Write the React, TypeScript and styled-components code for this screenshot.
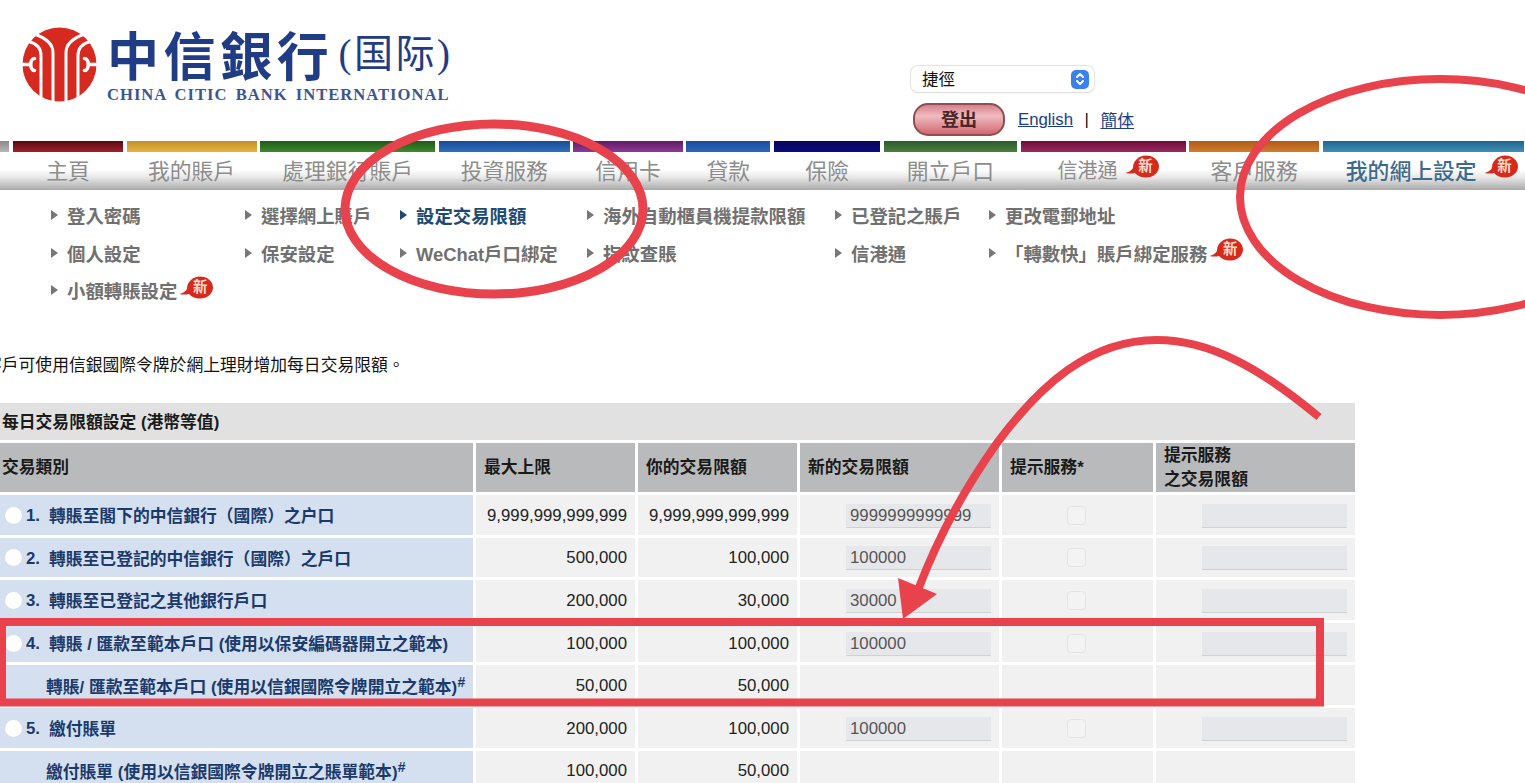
import React from "react";
import styled, { createGlobalStyle } from "styled-components";

const Global = createGlobalStyle`
  html, body { margin: 0; padding: 0; background: #fff; overflow: hidden; }
  body { font-family: "Liberation Sans", "Noto Sans CJK TC", sans-serif; font-size: 16.8px; color: #111; }
`;

const Page = styled.div`
  position: relative;
  width: 1525px;
  height: 783px;
  overflow: hidden;
`;

const Header = styled.header`
  display: flex;
  height: 141px;
`;

const LogoBlock = styled.div`
  flex: 0 0 911px;
  display: flex;
  padding: 27px 0 0 22px;
  box-sizing: border-box;
`;

const LogoMark = styled.svg`
  width: 75px;
  height: 75px;
  flex: none;
`;

const LogoText = styled.div`
  margin-left: 10px;
  display: flex;
  flex-direction: column;
  color: #1f3c84;
`;

const LogoCn = styled.div`
  display: flex;
  align-items: center;
  height: 54px;
  font-family: "Noto Sans CJK TC", sans-serif;
  font-size: 52px;
  font-weight: 700;
  letter-spacing: 4.6px;
  line-height: 54px;
  white-space: nowrap;
`;

const LogoSuffix = styled.span`
  font-family: "Liberation Serif", "Noto Sans CJK SC", serif;
  font-size: 39px;
  font-weight: 400;
  letter-spacing: 2.5px;
  margin-left: 5px;
`;

const LogoEn = styled.div`
  font-family: "Liberation Serif", serif;
  font-size: 16.6px;
  font-weight: 700;
  letter-spacing: 1px;
  word-spacing: 3px;
  line-height: 18px;
  margin-top: 5px;
  color: #3c5590;
  white-space: nowrap;
`;

const UserCol = styled.div`
  display: flex;
  flex-direction: column;
  padding-top: 66px;
  gap: 11px;
`;

const FakeSelect = styled.div`
  position: relative;
  width: 183px;
  height: 26px;
  box-sizing: border-box;
  display: flex;
  align-items: center;
  padding: 0 5px 2px 11px;
  justify-content: space-between;
  background: #fff;
  border-radius: 7px;
  box-shadow: 0 0 1px 1px #e2e2e2, 0 1px 1px #cfcfcf;
  font-size: 16.4px;
`;

const SelectArrows = styled.span`
  display: flex;
  width: 18px;
  height: 19px;
  margin-top: 2px;
  align-items: center;
  justify-content: center;
  background: #3a80ee;
  border-radius: 5px;
`;

const UserRow = styled.div`
  display: flex;
  align-items: center;
  height: 33px;
  padding-left: 2px;
`;

const LogoutButton = styled.button`
  width: 92px;
  height: 33px;
  padding: 0 0 3px;
  border: 2px solid #8d4f4f;
  border-radius: 15px;
  background: linear-gradient(#d6808a 0%, #efbcc0 38%, #e9a9ae 52%, #d2666f 100%);
  color: #4a2626;
  font-family: inherit;
  font-size: 18px;
  font-weight: 700;
`;

const LangLink = styled.a<{ $gap?: number }>`
  margin-left: ${(p) => p.$gap ?? 0}px;
  padding-top: 1px;
  color: #1d3e86;
  text-decoration: underline;
  font-size: 16.8px;
`;

const LangSep = styled.span`
  margin: 0 11.5px;
  font-size: 16.8px;
`;

const Nav = styled.nav`
  display: flex;
  gap: 3.6px;
  height: 49px;
  background: linear-gradient(#fff 0, #fff 58%, #e6e6e6 75%, #a9a9a9 100%);
`;

const NavItem = styled.div<{ $w: number; $from: string; $to: string }>`
  flex: 0 0 ${(p) => p.$w}px;
  display: flex;
  flex-direction: column;
  &::before {
    content: "";
    height: 11px;
    background: linear-gradient(${(p) => p.$from}, ${(p) => p.$to});
  }
`;

const NavLabel = styled.div<{ $active?: boolean; $pad?: number; $size?: number }>`
  flex: 1;
  display: flex;
  align-items: center;
  justify-content: center;
  gap: 7px;
  padding-left: ${(p) => p.$pad ?? 0}px;
  padding-bottom: 3px;
  font-size: ${(p) => p.$size ?? 21.8}px;
  font-weight: ${(p) => (p.$active ? 500 : 400)};
  color: ${(p) => (p.$active ? "#3c6a8c" : "#8c8c8c")};
  white-space: nowrap;
`;

const BadgeWrap = styled.span`
  position: relative;
  display: inline-block;
  width: 34px;
  height: 24px;
  flex: none;
  margin-top: -5px;
`;

const BadgeSvg = styled.svg`
  display: block;
  width: 34px;
  height: 24px;
`;

const BadgeText = styled.span`
  position: absolute;
  left: 11px;
  top: 3px;
  width: 20px;
  text-align: center;
  font-size: 14.5px;
  line-height: 17px;
  font-weight: 700;
  color: #ffdccb;
`;

const SubGrid = styled.div`
  display: grid;
  grid-template-columns: 194px 155px 187px 248px 154px auto;
  grid-auto-rows: 37.8px;
  padding: 6px 0 0 51px;
`;

const SubItem = styled.div<{ $active?: boolean }>`
  display: flex;
  align-items: center;
  gap: 2px;
  font-size: 18.4px;
  font-weight: 700;
  color: ${(p) => (p.$active ? "#1e4a70" : "#707070")};
  white-space: nowrap;
  &::before {
    content: "";
    width: 0;
    height: 0;
    margin-right: 7px;
    border-left: 7px solid ${(p) => (p.$active ? "#1e4a70" : "#777")};
    border-top: 5px solid transparent;
    border-bottom: 5px solid transparent;
  }
`;

const Intro = styled.p`
  margin: 45px 0 24.6px -15px;
  font-size: 16.8px;
  line-height: 24px;
  color: #111;
  white-space: nowrap;
`;

const Table = styled.div`
  display: grid;
  width: 1355px;
  grid-template-columns: 473px 159px 159px 199px 151px 199px;
  grid-template-rows: 37px 49px;
  grid-auto-rows: 39.6px;
  gap: 3px;
`;

const TitleCell = styled.div`
  grid-column: 1 / -1;
  display: flex;
  align-items: center;
  padding-left: 2px;
  background: #e1e1e1;
  font-weight: 700;
  color: #1a1a1a;
`;

const HeadCell = styled.div<{ $first?: boolean }>`
  display: flex;
  align-items: center;
  padding: 2px 0 0 ${(p) => (p.$first ? 2 : 8)}px;
  background: #b9babc;
  font-weight: 700;
  line-height: 24px;
  color: #1a1a1a;
`;

const LabelCell = styled.div<{ $sub?: boolean }>`
  display: flex;
  align-items: center;
  padding: 1px 0 0 ${(p) => (p.$sub ? 46 : 5)}px;
  background: #d4e0f0;
  font-weight: 700;
  color: #1b3a6b;
  white-space: nowrap;
`;

const Radio = styled.span`
  flex: none;
  width: 17px;
  height: 17px;
  border-radius: 50%;
  background: #fff;
  box-shadow: 0 0 1px #c9d3e0;
`;

const RowNum = styled.span`
  flex: none;
  width: 23px;
  margin-left: 4px;
  padding-top: 2px;
`;

const Sup = styled.sup`
  font-size: 14px;
  font-style: italic;
  line-height: 0;
  margin-top: -8px;
`;

const ValueCell = styled.div`
  display: flex;
  align-items: center;
  justify-content: flex-end;
  padding: 2px 8px 0 0;
  background: #f1f1f1;
  color: #222;
`;

const CheckCell = styled.div`
  display: flex;
  align-items: center;
  justify-content: center;
  padding: 1px 3px 0 0;
  background: #f1f1f1;
`;

const Field = styled.input`
  width: 145px;
  height: 24px;
  box-sizing: border-box;
  padding: 1px 0 0 4px;
  border: 0;
  border-bottom: 1px solid #d0d1d5;
  background: #e6e7ea;
  font-family: inherit;
  font-size: 16.8px;
  color: #555;
  outline: none;
`;

const CheckBox = styled.span`
  width: 19px;
  height: 19px;
  box-sizing: border-box;
  border: 1px solid #e3e3e3;
  border-radius: 4px;
  background: #f3f3f3;
`;

const Overlay = styled.svg`
  position: absolute;
  left: 0;
  top: 0;
  width: 1525px;
  height: 783px;
  pointer-events: none;
`;

const Badge = () => (
  <BadgeWrap>
    <BadgeSvg viewBox="0 0 34 24">
      <path
        d="M21 0.5C28.2 0.5 34 5.3 34 11.5S28.2 22.5 21 22.5C16 22.5 12 20.5 10 18C7 18.8 3.5 18.8 0.5 18C3.5 17.2 6.5 15.5 8 13C7.8 6 13.8 0.5 21 0.5Z"
        fill="#d62a1c"
      />
    </BadgeSvg>
    <BadgeText>新</BadgeText>
  </BadgeWrap>
);

const navItems: { w: number; from: string; to: string; label: string; badge?: boolean; pad?: number; active?: boolean; size?: number }[] = [
  { w: 9.4, from: "#8a8a8a", to: "#b5b5b5", label: "" },
  { w: 110, from: "#540a12", to: "#a3202a", label: "主頁" },
  { w: 130, from: "#c2902a", to: "#e6b53e", label: "我的賬戶" },
  { w: 175, from: "#1f5a1a", to: "#3f8a2c", label: "處理銀行賬戶" },
  { w: 131, from: "#1a4c94", to: "#2f6fbc", label: "投資服務" },
  { w: 109.4, from: "#5f1a66", to: "#8f3a92", label: "信用卡" },
  { w: 84, from: "#1a4c9c", to: "#2c66b8", label: "貸款" },
  { w: 106.4, from: "#05055a", to: "#0c0c80", label: "保險" },
  { w: 133, from: "#2a5a2c", to: "#4c7f40", label: "開立戶口" },
  { w: 165, from: "#6e0c3c", to: "#9a2a5e", label: "信港通", badge: true, pad: 10, size: 20 },
  { w: 130, from: "#b05a16", to: "#cf7e2e", label: "客戶服務" },
  { w: 201, from: "#1c6490", to: "#4290b4", label: "我的網上設定", badge: true, pad: 17, active: true },
];

const subItems: { t: string; active?: boolean; badge?: boolean }[] = [
  { t: "登入密碼" },
  { t: "選擇網上賬戶" },
  { t: "設定交易限額", active: true },
  { t: "海外自動櫃員機提款限額" },
  { t: "已登記之賬戶" },
  { t: "更改電郵地址" },
  { t: "個人設定" },
  { t: "保安設定" },
  { t: "WeChat戶口綁定" },
  { t: "指紋查賬" },
  { t: "信港通" },
  { t: "「轉數快」賬戶綁定服務", badge: true },
  { t: "小額轉賬設定", badge: true },
];

const rows: { num?: string; label: string; sup?: boolean; max: string; cur: string; value?: string; full: boolean }[] = [
  { num: "1.", label: "轉賬至閣下的中信銀行（國際）之户口", max: "9,999,999,999,999", cur: "9,999,999,999,999", value: "9999999999999", full: true },
  { num: "2.", label: "轉賬至已登記的中信銀行（國際）之戶口", max: "500,000", cur: "100,000", value: "100000", full: true },
  { num: "3.", label: "轉賬至已登記之其他銀行戶口", max: "200,000", cur: "30,000", value: "30000", full: true },
  { num: "4.", label: "轉賬 / 匯款至範本戶口 (使用以保安編碼器開立之範本)", max: "100,000", cur: "100,000", value: "100000", full: true },
  { label: "轉賬/ 匯款至範本戶口 (使用以信銀國際令牌開立之範本)", sup: true, max: "50,000", cur: "50,000", full: false },
  { num: "5.", label: "繳付賬單", max: "200,000", cur: "100,000", value: "100000", full: true },
  { label: "繳付賬單 (使用以信銀國際令牌開立之賬單範本)", sup: true, max: "100,000", cur: "50,000", full: false },
];

export default function App() {
  return (
    <Page>
      <Global />
      <Header>
        <LogoBlock>
          <LogoMark viewBox="-37.5 -37.5 75 75">
            <circle r="37" fill="#d62a20" />
            <g fill="none" stroke="#fff" strokeWidth="3">
              <path d="M-6.5 38V-12C-6.5-20-13-26-24-30" />
              <path d="M6.5 38V-12C6.5-20 13-26 24-30" />
              <path d="M-18.5 38V-9C-18.5-16-23-21-31-23" />
              <path d="M18.5 38V-9C18.5-16 23-21 31-23" />
            </g>
            <g fill="none" stroke="#fff" strokeWidth="3.6" strokeLinecap="round">
              <path d="M-38 0H-29M-25-6C-30-6-30 6-25 6" />
              <path d="M38 0H29M25-6C30-6 30 6 25 6" />
            </g>
          </LogoMark>
          <LogoText>
            <LogoCn>
              中信銀行<LogoSuffix>(国际)</LogoSuffix>
            </LogoCn>
            <LogoEn>CHINA CITIC BANK INTERNATIONAL</LogoEn>
          </LogoText>
        </LogoBlock>
        <UserCol>
          <FakeSelect>
            捷徑
            <SelectArrows>
              <svg width="10" height="14" viewBox="0 0 10 14" fill="none" stroke="#fff" strokeWidth="2" strokeLinecap="round" strokeLinejoin="round">
                <path d="M2 5l3-3 3 3M2 9l3 3 3-3" />
              </svg>
            </SelectArrows>
          </FakeSelect>
          <UserRow>
            <LogoutButton type="button">登出</LogoutButton>
            <LangLink $gap={13}>English</LangLink>
            <LangSep>|</LangSep>
            <LangLink>簡体</LangLink>
          </UserRow>
        </UserCol>
      </Header>

      <Nav>
        {navItems.map((n, i) => (
          <NavItem key={i} $w={n.w} $from={n.from} $to={n.to}>
            <NavLabel $active={n.active} $pad={n.pad} $size={n.size}>
              {n.label}
              {n.badge && <Badge />}
            </NavLabel>
          </NavItem>
        ))}
      </Nav>

      <SubGrid>
        {subItems.map((s) => (
          <SubItem key={s.t} $active={s.active}>
            {s.t}
            {s.badge && <Badge />}
          </SubItem>
        ))}
      </SubGrid>

      <Intro>客戶可使用信銀國際令牌於網上理財增加每日交易限額。</Intro>

      <Table>
        <TitleCell>每日交易限額設定 (港幣等值)</TitleCell>
        <HeadCell $first>交易類別</HeadCell>
        <HeadCell>最大上限</HeadCell>
        <HeadCell>你的交易限額</HeadCell>
        <HeadCell>新的交易限額</HeadCell>
        <HeadCell>提示服務*</HeadCell>
        <HeadCell>
          提示服務
          <br />
          之交易限額
        </HeadCell>
        {rows.map((r) => (
          <React.Fragment key={r.label}>
            <LabelCell $sub={!r.num}>
              {r.num && <Radio />}
              {r.num && <RowNum>{r.num}</RowNum>}
              {r.label}
              {r.sup && <Sup>#</Sup>}
            </LabelCell>
            <ValueCell>{r.max}</ValueCell>
            <ValueCell>{r.cur}</ValueCell>
            <ValueCell>{r.full && <Field readOnly value={r.value} />}</ValueCell>
            <CheckCell>{r.full && <CheckBox />}</CheckCell>
            <ValueCell>{r.full && <Field readOnly value="" />}</ValueCell>
          </React.Fragment>
        ))}
      </Table>

      <Overlay viewBox="0 0 1525 783" fill="none">
        <g stroke="#e8434c">
          <ellipse cx="494" cy="209" rx="149" ry="85" strokeWidth="9" />
          <ellipse cx="1440" cy="197" rx="200" ry="118" strokeWidth="8" />
          <rect x="2" y="622" width="1318" height="80.5" strokeWidth="8" />
          <path d="M1319 417C1260 368 1210 340 1157 340C1090 340 1040 385 997 443C960 495 935 545 918 590" strokeWidth="8" />
        </g>
        <path d="M898 578L937 594L903 619Z" fill="#e8434c" />
      </Overlay>
    </Page>
  );
}
